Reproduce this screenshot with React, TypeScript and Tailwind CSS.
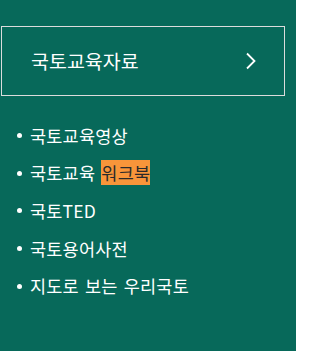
import React from "react";

const items: React.ReactNode[] = [
  "국토교육영상",
  <>
    국토교육 <span className="bg-[#f8953a] text-[#2a2a2a]">워크북</span>
  </>,
  "국토TED",
  "국토용어사전",
  "지도로 보는 우리국토",
];

export default function App() {
  return (
    <div
      className="w-[296px] h-[351px] bg-[#07695a] text-white overflow-hidden"
      style={{ fontFamily: '"Noto Sans CJK KR", "Noto Sans", sans-serif' }}
    >
      <div className="pt-[26px] pl-[1px]">
        <div className="w-[284px] h-[70px] border border-[#dcdcdc] flex items-center justify-between pl-[29px] pr-[27px]">
          <span className="text-[19.5px] leading-[24px]">국토교육자료</span>
          <svg width="12" height="18" viewBox="0 0 12 18" fill="none">
            <path d="M2 1.5 L9.5 9 L2 16.5" stroke="white" strokeWidth="1.8" />
          </svg>
        </div>
      </div>
      <ul className="mt-[21px] flex flex-col">
        {items.map((it, i) => (
          <li key={i} className="h-[37.6px] flex items-center pl-[17px] text-[17.5px] leading-[24px] tracking-[0.2px] [word-spacing:2px]">
            <span className="w-[5px] h-[5px] rounded-full bg-white mr-[8px] shrink-0" />
            <span>{it}</span>
          </li>
        ))}
      </ul>
    </div>
  );
}
